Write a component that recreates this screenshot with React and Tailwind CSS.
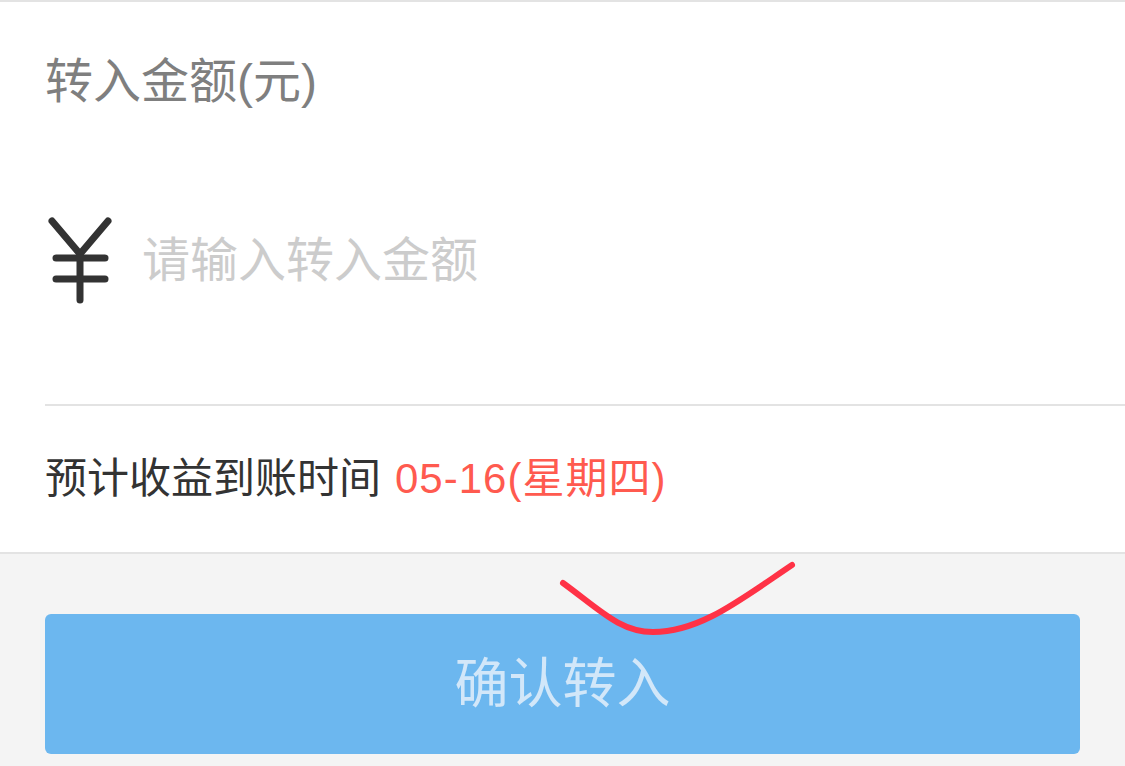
import React, { useState } from 'react';

const font = { fontFamily: '"Liberation Sans", "Noto Sans CJK SC", sans-serif' };

function YenIcon() {
  return (
    <svg width="64" height="90" viewBox="0 0 64 90" className="shrink-0">
      <g stroke="#333333" strokeWidth="7" strokeLinecap="round" fill="none">
        <path d="M4 5 L32 38 L60 5" />
        <path d="M32 38 L32 84" />
        <path d="M8 42 L57 42" />
        <path d="M8 63 L57 63" />
      </g>
    </svg>
  );
}

export default function App() {
  const [amount, setAmount] = useState('');

  return (
    <div className="relative w-full h-[766px] overflow-hidden bg-[#f4f4f4]" style={font}>
      <div className="bg-white border-t-2 border-b-2 border-[#e3e3e3]">
        <div className="h-[160px] flex items-center pl-[45px]">
          <span className="text-[48px] text-[#7f7f7f] leading-none">转入金额(元)</span>
        </div>
        <div className="h-[198px] mb-[44px] flex items-center pl-[48px] gap-[30px]">
          <YenIcon />
          <input
            type="text"
            value={amount}
            onChange={(e) => setAmount(e.target.value)}
            placeholder="请输入转入金额"
            className="flex-1 text-[48px] text-[#333] placeholder:text-[#cccccc] outline-none bg-transparent"
            style={font}
          />
        </div>
        <div className="ml-[45px] border-t-2 border-[#e3e3e3]" />
        <div className="h-[146px] flex items-center pl-[45px] text-[42px] leading-none">
          <span className="text-[#333333]">预计收益到账时间</span>
          <span className="text-[#ff5a4f] ml-[14px] tracking-[1px]">05-16(星期四)</span>
        </div>
      </div>
      <div className="pt-[60px] px-[45px]">
        <button className="w-full h-[140px] rounded-[6px] bg-[#6cb7ef] text-[#d2e7f9] text-[54px] flex items-center justify-center" style={font}>
          确认转入
        </button>
      </div>
      <svg className="absolute inset-0 pointer-events-none" width="1125" height="766">
        <path
          d="M563 583 C600 610, 620 632, 653 632 C700 632, 740 600, 792 565"
          stroke="#ff3246"
          strokeWidth="6"
          strokeLinecap="round"
          fill="none"
        />
      </svg>
    </div>
  );
}
